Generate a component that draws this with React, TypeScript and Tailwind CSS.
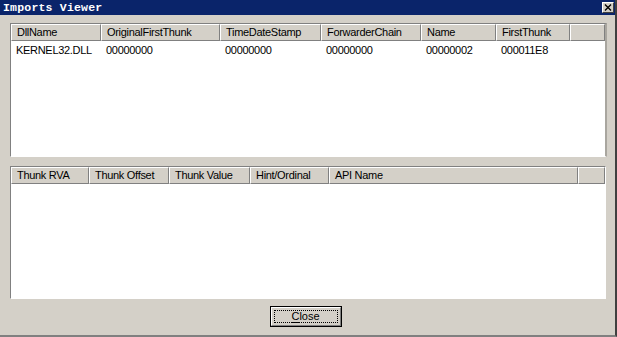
import React from "react";

const topCols = [
  { label: "DllName", w: 90 },
  { label: "OriginalFirstThunk", w: 119 },
  { label: "TimeDateStamp", w: 101 },
  { label: "ForwarderChain", w: 100 },
  { label: "Name", w: 75 },
  { label: "FirstThunk", w: 74 },
];
const topRow = ["KERNEL32.DLL", "00000000", "00000000", "00000000", "00000002", "000011E8"];

const botCols = [
  { label: "Thunk RVA", w: 78 },
  { label: "Thunk Offset", w: 80 },
  { label: "Thunk Value", w: 81 },
  { label: "Hint/Ordinal", w: 79 },
  { label: "API Name", w: 249 },
];

function HeaderCell({ label, w }: { label: string; w?: number }) {
  return (
    <div
      className="h-[17px] shrink-0 flex items-center pl-[5px] border-t border-l border-t-white border-l-white border-r border-b border-r-[#808080] border-b-[#808080] whitespace-nowrap overflow-hidden"
      style={w ? { width: w } : undefined}
    >
      {label}
    </div>
  );
}

export default function App() {
  return (
    <div
      className="w-[617px] h-[337px] bg-[#d4d0c8] flex flex-col text-[11px] text-black tracking-[-0.3px] border-r-2 border-b-2 border-r-[#404040] border-b-[#808080] overflow-hidden"
      style={{ fontFamily: '"Liberation Sans", Arial, sans-serif' }}
    >
      <div className="h-[15px] bg-[#0a246a] flex items-center justify-between pl-[3px] pr-[1px] shrink-0">
        <span
          className="text-white font-bold text-[11.5px] tracking-[0.2px] leading-none"
          style={{ fontFamily: '"Liberation Mono", "Courier New", monospace' }}
        >
          Imports Viewer
        </span>
        <div className="w-[12px] h-[11px] bg-[#d4d0c8] border-t border-l border-t-white border-l-white border-r border-b border-r-[#404040] border-b-[#404040] flex items-center justify-center">
          <svg width="8" height="7" viewBox="0 0 8 7">
            <path d="M1 0.5 L7 6.5 M7 0.5 L1 6.5" stroke="#000" strokeWidth="1.4" />
          </svg>
        </div>
      </div>

      <div className="flex flex-col pl-[10px] pr-[8px] pt-[8px]">
        <div className="h-[134px] bg-white border-t border-l border-t-[#808080] border-l-[#808080] border-r-2 border-r-[#a9a69f] border-b border-b-white flex flex-col">
          <div className="flex bg-[#d4d0c8]">
            {topCols.map((c) => (
              <HeaderCell key={c.label} label={c.label} w={c.w} />
            ))}
            <HeaderCell label="" w={35} />
          </div>
          <div className="flex h-[18px] items-center">
            {topRow.map((t, i) => (
              <div key={i} className="shrink-0 pl-[5px]" style={{ width: topCols[i].w }}>
                {t}
              </div>
            ))}
          </div>
        </div>

        <div className="mt-[9px] h-[133px] w-[596px] bg-white border-t border-l border-t-[#808080] border-l-[#808080] border-r border-b border-r-white border-b-white flex flex-col">
          <div className="flex bg-[#d4d0c8]">
            {botCols.map((c) => (
              <HeaderCell key={c.label} label={c.label} w={c.w} />
            ))}
            <HeaderCell label="" w={27} />
          </div>
        </div>
      </div>

      <div className="flex justify-center pt-[7px] pr-[4px]">
        <div className="w-[72px] h-[21px] border border-black">
          <div className="w-full h-full border-t border-l border-t-white border-l-white border-r border-b border-r-[#808080] border-b-[#808080] p-[2px]">
            <div className="w-full h-full border border-dotted border-black flex items-center justify-center tracking-normal">
              <span>
                <span className="underline underline-offset-2">C</span>lose
              </span>
            </div>
          </div>
        </div>
      </div>
    </div>
  );
}
